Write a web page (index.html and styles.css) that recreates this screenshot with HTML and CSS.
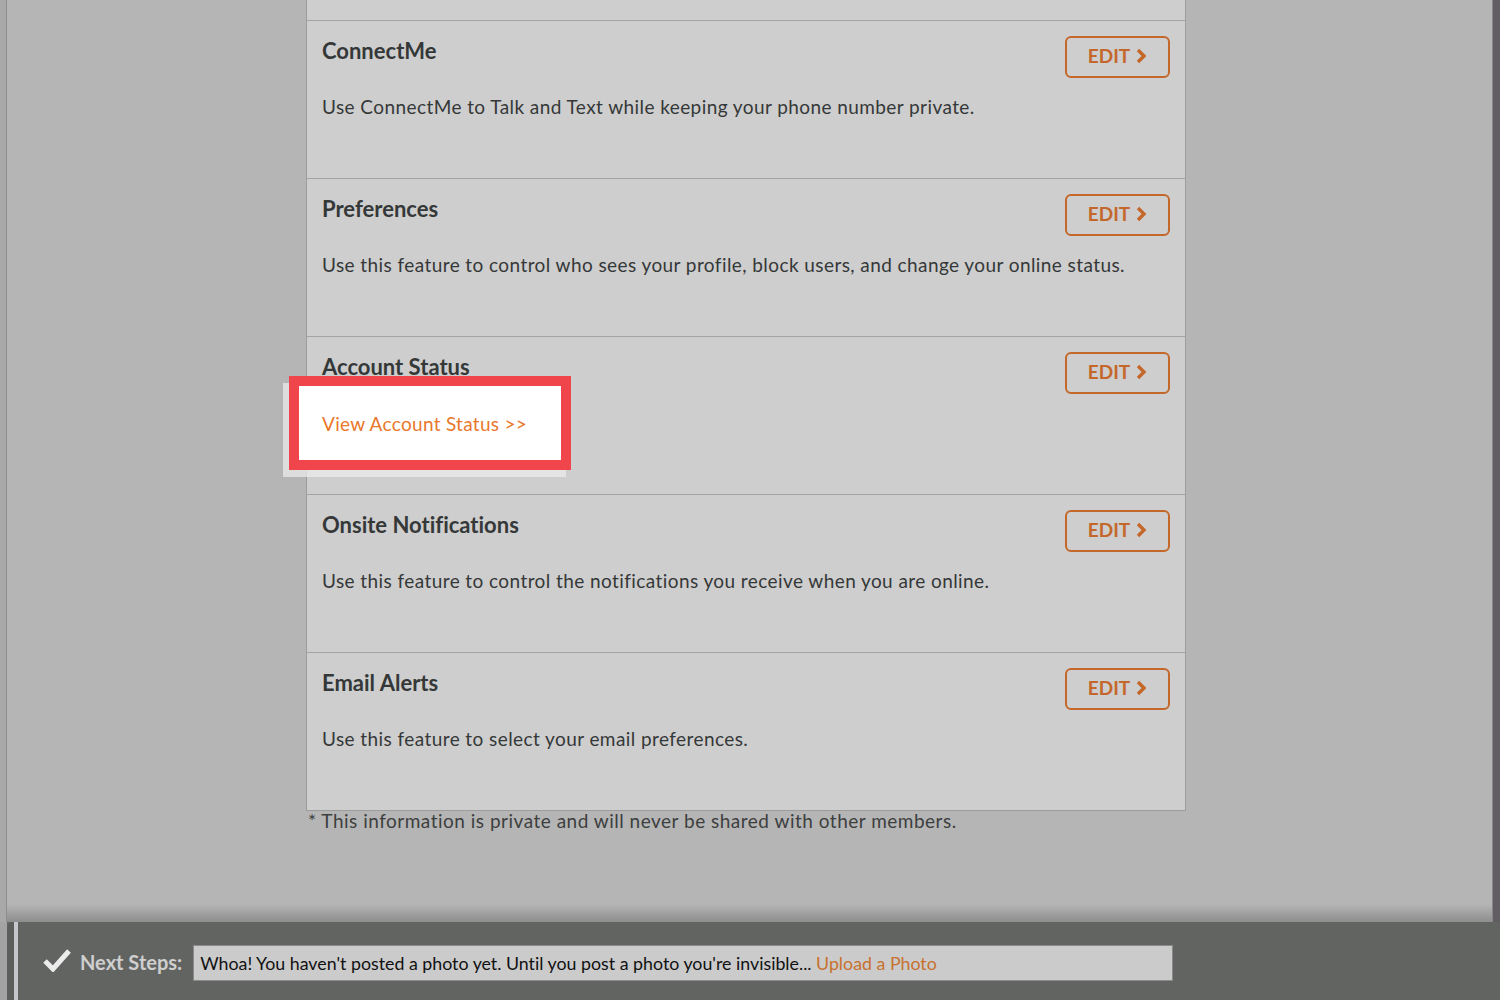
FILE: index.html
```html
<!DOCTYPE html>
<html>
<head>
<meta charset="utf-8">
<link rel="stylesheet" href="styles.css">
</head>
<body>
<div class="page">
  <div class="main">
    <div class="left-strip"></div>
    <div class="content">
      <div class="card">
        <div class="section section-partial"></div>
        <div class="section">
          <div class="section-head">
            <h2 class="title">ConnectMe</h2>
            <a class="edit-btn">EDIT <span class="chev"><svg width="11" height="16" viewBox="0 0 11 16"><path d="M2 2 L8 8 L2 14" fill="none" stroke="currentColor" stroke-width="3.4"/></svg></span></a>
          </div>
          <p class="desc">Use ConnectMe to Talk and Text while keeping your phone number private.</p>
        </div>
        <div class="section">
          <div class="section-head">
            <h2 class="title">Preferences</h2>
            <a class="edit-btn">EDIT <span class="chev"><svg width="11" height="16" viewBox="0 0 11 16"><path d="M2 2 L8 8 L2 14" fill="none" stroke="currentColor" stroke-width="3.4"/></svg></span></a>
          </div>
          <p class="desc">Use this feature to control who sees your profile, block users, and change your online status.</p>
        </div>
        <div class="section section-status">
          <div class="section-head">
            <h2 class="title">Account Status</h2>
            <a class="edit-btn">EDIT <span class="chev"><svg width="11" height="16" viewBox="0 0 11 16"><path d="M2 2 L8 8 L2 14" fill="none" stroke="currentColor" stroke-width="3.4"/></svg></span></a>
          </div>
          <div class="highlight-shadow"></div>
          <div class="highlight">
            <a class="status-link">View Account Status &gt;&gt;</a>
          </div>
        </div>
        <div class="section">
          <div class="section-head">
            <h2 class="title">Onsite Notifications</h2>
            <a class="edit-btn">EDIT <span class="chev"><svg width="11" height="16" viewBox="0 0 11 16"><path d="M2 2 L8 8 L2 14" fill="none" stroke="currentColor" stroke-width="3.4"/></svg></span></a>
          </div>
          <p class="desc">Use this feature to control the notifications you receive when you are online.</p>
        </div>
        <div class="section">
          <div class="section-head">
            <h2 class="title">Email Alerts</h2>
            <a class="edit-btn">EDIT <span class="chev"><svg width="11" height="16" viewBox="0 0 11 16"><path d="M2 2 L8 8 L2 14" fill="none" stroke="currentColor" stroke-width="3.4"/></svg></span></a>
          </div>
          <p class="desc">Use this feature to select your email preferences.</p>
        </div>
      </div>
      <p class="footnote">* This information is private and will never be shared with other members.</p>
    </div>
    <div class="right-strip"></div>
  </div>
  <div class="bottom-bar">
    <div class="bar-left"></div>
    <div class="bar-line"></div>
    <div class="bar-inner">
      <svg class="check" width="28" height="24" viewBox="0 0 28 24"><path d="M2 13 L10 21 L26 3" fill="none" stroke="#ececec" stroke-width="5" stroke-linejoin="miter"/></svg>
      <span class="next-label">Next Steps:</span>
      <div class="next-box">Whoa! You haven't posted a photo yet. Until you post a photo you're invisible... <a class="upload">Upload a Photo</a></div>
    </div>
  </div>
</div>
</body>
</html>
```

FILE: styles.css
```css
* { box-sizing: border-box; }
html, body { margin: 0; padding: 0; }
body {
  width: 1500px;
  height: 1000px;
  overflow: hidden;
  font-family: Lato, "Liberation Sans", sans-serif;
  font-variant-ligatures: none;
  background: #b5b5b5;
}
.page {
  display: flex;
  flex-direction: column;
  height: 1000px;
}
.main {
  display: flex;
  height: 922px;
  position: relative;
}
.main::after {
  content: "";
  position: absolute;
  left: 7px;
  right: 8px;
  bottom: 0;
  height: 18px;
  background: linear-gradient(to bottom, rgba(0,0,0,0), rgba(0,0,0,0.22));
  pointer-events: none;
}
.left-strip {
  width: 7px;
  background: #a8a8a8;
  border-right: 1px solid #8e8e8e;
  flex: none;
}
.right-strip {
  width: 8px;
  background: #625d63;
  border-left: 1px solid #8a858a;
  flex: none;
}
.content {
  flex: 1;
  padding-left: 299px;
}
.card {
  width: 880px;
  background: #cecece;
  border: 1px solid #9c9c9c;
  border-top: none;
}
.section {
  height: 158px;
  border-bottom: 1px solid #a4a4a4;
  padding: 15px 15px 0 15px;
  position: relative;
}
.section:last-child { border-bottom: none; height: 157px; }
.section-partial { height: 21px; padding: 0; }
.section-head {
  display: flex;
  justify-content: space-between;
  align-items: flex-start;
}
.title {
  margin: 0;
  font-size: 22px;
  font-weight: 700;
  color: #353838;
  line-height: 30px;
}
.edit-btn {
  display: flex;
  align-items: center;
  justify-content: center;
  gap: 6px;
  width: 105px;
  height: 42px;
  margin-top: 0;
  padding-bottom: 3px;
  border: 2px solid #c4672b;
  border-radius: 6px;
  color: #c4672b;
  font-weight: 700;
  font-size: 19px;
}
.chev { display: flex; }
.desc {
  margin: 16px 0 0 0;
  font-size: 19px;
  letter-spacing: 0.42px;
  color: #353838;
  line-height: 26px;
}
.highlight-shadow {
  position: absolute;
  left: -24px;
  top: 46px;
  width: 283px;
  height: 94px;
  background: rgba(235,235,235,0.75);
}
.highlight {
  position: absolute;
  left: -18px;
  top: 39px;
  width: 282px;
  height: 94px;
  background: #ffffff;
  border: 10px solid #ef454b;
  padding-left: 23px;
  display: flex;
  align-items: center;
}
.status-link {
  color: #e9772c;
  font-size: 19px;
  letter-spacing: 0.3px;
}
.footnote {
  margin: 0;
  padding-left: 2px;
  font-size: 19px;
  letter-spacing: 0.5px;
  line-height: 20px;
  color: #3d3f3f;
}
.bottom-bar {
  height: 78px;
  display: flex;
  background: #626462;
}
.bar-left {
  width: 7px;
  background: #a3a3a3;
  flex: none;
}
.bar-line {
  width: 11px;
  flex: none;
  background: #5c5e5c;
  border-right: 4px solid #c6c6cc;
  border-top-left-radius: 6px;
}
.bar-inner {
  flex: 1;
  display: flex;
  align-items: center;
  padding-left: 25px;
  padding-top: 4px;
}
.check { flex: none; margin-top: -6px; }
.next-label {
  margin-left: 9px;
  font-size: 20px;
  font-weight: 700;
  color: #cfcfcf;
  margin-top: -2px;
}
.next-box {
  margin-left: 11px;
  width: 980px;
  height: 36px;
  background: #cbcbcb;
  border: 1px solid #8a8a8a;
  padding-left: 6px;
  display: flex;
  align-items: center;
  font-size: 17.8px;
  color: #111;
  white-space: pre;
}
.upload { color: #c8712f; }
```
